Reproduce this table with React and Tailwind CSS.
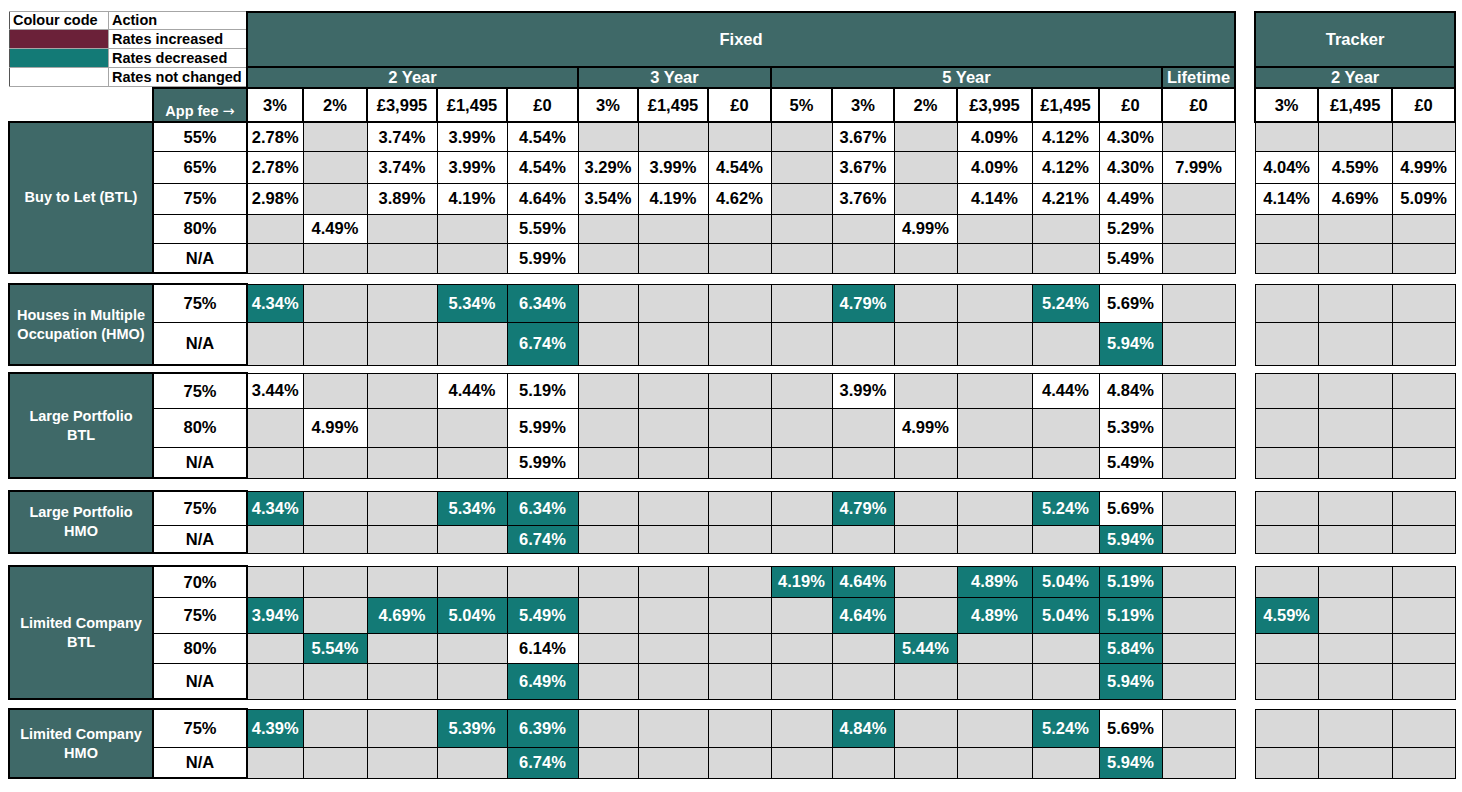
import React from 'react';

// column widths, line to line, left to right
const colWidths = [
  'w-[144px]', 'w-[94px]',
  'w-[56px]', 'w-[64px]', 'w-[70px]', 'w-[70px]', 'w-[71px]',
  'w-[60px]', 'w-[70px]', 'w-[63px]',
  'w-[61px]', 'w-[62px]', 'w-[63px]', 'w-[75px]', 'w-[67px]', 'w-[63px]',
  'w-[73px]',
  'w-[20px]',
  'w-[63px]', 'w-[74px]', 'w-[63px]',
];

const fixedFees = ['3%', '2%', '£3,995', '£1,495', '£0', '3%', '£1,495', '£0', '5%', '3%', '2%', '£3,995', '£1,495', '£0', '£0'];
const trackerFees = ['3%', '£1,495', '£0'];

const E = '';
// '*' prefix = rate decreased
const groups = [
  {
    label: ['Buy to Let (BTL)'],
    gap: 'h-[11px]',
    rows: [
      ['55%', 'h-[29px]', ['2.78%', E, '3.74%', '3.99%', '4.54%', E, E, E, E, '3.67%', E, '4.09%', '4.12%', '4.30%', E], [E, E, E]],
      ['65%', 'h-[32px]', ['2.78%', E, '3.74%', '3.99%', '4.54%', '3.29%', '3.99%', '4.54%', E, '3.67%', E, '4.09%', '4.12%', '4.30%', '7.99%'], ['4.04%', '4.59%', '4.99%']],
      ['75%', 'h-[31px]', ['2.98%', E, '3.89%', '4.19%', '4.64%', '3.54%', '4.19%', '4.62%', E, '3.76%', E, '4.14%', '4.21%', '4.49%', E], ['4.14%', '4.69%', '5.09%']],
      ['80%', 'h-[29px]', [E, '4.49%', E, E, '5.59%', E, E, E, E, E, '4.99%', E, E, '5.29%', E], [E, E, E]],
      ['N/A', 'h-[30px]', [E, E, E, E, '5.99%', E, E, E, E, E, E, E, E, '5.49%', E], [E, E, E]],
    ],
  },
  {
    label: ['Houses in Multiple', 'Occupation (HMO)'],
    gap: 'h-[8px]',
    rows: [
      ['75%', 'h-[38px]', ['*4.34%', E, E, '*5.34%', '*6.34%', E, E, E, E, '*4.79%', E, E, '*5.24%', '5.69%', E], [E, E, E]],
      ['N/A', 'h-[43px]', [E, E, E, E, '*6.74%', E, E, E, E, E, E, E, E, '*5.94%', E], [E, E, E]],
    ],
  },
  {
    label: ['Large Portfolio', 'BTL'],
    gap: 'h-[13px]',
    rows: [
      ['75%', 'h-[35px]', ['3.44%', E, E, '4.44%', '5.19%', E, E, E, E, '3.99%', E, E, '4.44%', '4.84%', E], [E, E, E]],
      ['80%', 'h-[39px]', [E, '4.99%', E, E, '5.99%', E, E, E, E, E, '4.99%', E, E, '5.39%', E], [E, E, E]],
      ['N/A', 'h-[31px]', [E, E, E, E, '5.99%', E, E, E, E, E, E, E, E, '5.49%', E], [E, E, E]],
    ],
  },
  {
    label: ['Large Portfolio', 'HMO'],
    gap: 'h-[13px]',
    rows: [
      ['75%', 'h-[34px]', ['*4.34%', E, E, '*5.34%', '*6.34%', E, E, E, E, '*4.79%', E, E, '*5.24%', '5.69%', E], [E, E, E]],
      ['N/A', 'h-[28px]', [E, E, E, E, '*6.74%', E, E, E, E, E, E, E, E, '*5.94%', E], [E, E, E]],
    ],
  },
  {
    label: ['Limited Company', 'BTL'],
    gap: 'h-[10px]',
    rows: [
      ['70%', 'h-[31px]', [E, E, E, E, E, E, E, E, '*4.19%', '*4.64%', E, '*4.89%', '*5.04%', '*5.19%', E], [E, E, E]],
      ['75%', 'h-[36px]', ['*3.94%', E, '*4.69%', '*5.04%', '*5.49%', E, E, E, E, '*4.64%', E, '*4.89%', '*5.04%', '*5.19%', E], ['*4.59%', E, E]],
      ['80%', 'h-[30px]', [E, '*5.54%', E, E, '6.14%', E, E, E, E, E, '*5.44%', E, E, '*5.84%', E], [E, E, E]],
      ['N/A', 'h-[36px]', [E, E, E, E, '*6.49%', E, E, E, E, E, E, E, E, '*5.94%', E], [E, E, E]],
    ],
  },
  {
    label: ['Limited Company', 'HMO'],
    gap: null,
    rows: [
      ['75%', 'h-[38px]', ['*4.39%', E, E, '*5.39%', '*6.39%', E, E, E, E, '*4.84%', E, E, '*5.24%', '5.69%', E], [E, E, E]],
      ['N/A', 'h-[31px]', [E, E, E, E, '*6.74%', E, E, E, E, E, E, E, E, '*5.94%', E], [E, E, E]],
    ],
  },
];

const Rate = ({ v }) => {
  if (!v) return <td className="p-0 border border-black bg-[#d9d9d9]" />;
  const down = v.startsWith('*');
  return (
    <td className={`p-0 border border-black text-center ${down ? 'bg-[#137a76] text-white' : 'bg-white text-black'}`}>
      {down ? v.slice(1) : v}
    </td>
  );
};

const Spacer = () => <td className="p-0 border-0" />;

const Legend = () => (
  <table className="table-fixed border-collapse w-[237px] -mt-px text-[14.5px] text-black leading-none">
    <colgroup>
      <col className="w-[99px]" />
      <col className="w-[138px]" />
    </colgroup>
    <tbody>
      <tr className="h-[18px]">
        <td className="p-0 pl-[3px] border border-[#a6a6a6] border-l-[#555] bg-white">Colour code</td>
        <td className="p-0 pl-[3px] border border-[#a6a6a6] border-r-2 bg-white">Action</td>
      </tr>
      <tr className="h-[19px]">
        <td className="p-0 border border-[#a6a6a6] border-l-[#555] bg-[#6b2139]" />
        <td className="p-0 pl-[3px] border border-[#a6a6a6] border-r-2 bg-white">Rates increased</td>
      </tr>
      <tr className="h-[19px]">
        <td className="p-0 border border-[#a6a6a6] border-l-[#555] bg-[#137a76]" />
        <td className="p-0 pl-[3px] border border-[#a6a6a6] border-r-2 bg-white">Rates decreased</td>
      </tr>
      <tr className="h-[19px]">
        <td className="p-0 border border-[#a6a6a6] border-l-[#555] bg-white" />
        <td className="p-0 pl-[3px] border border-[#a6a6a6] border-r-2 bg-white">Rates not changed</td>
      </tr>
    </tbody>
  </table>
);

const head = 'p-0 border-2 border-black bg-[#3f6968] text-white text-center';

export default function App() {
  return (
    <div className="min-h-screen bg-white pl-[8px] pt-[11px] font-['Liberation_Sans',Arial,sans-serif] font-bold">
      <table className="table-fixed border-collapse w-[1446px] text-[16.5px] leading-none">
        <colgroup>
          {colWidths.map((w, i) => (
            <col key={i} className={w} />
          ))}
        </colgroup>
        <tbody>
          <tr className="h-[53px]">
            <td colSpan={2} rowSpan={2} className="p-0 border-0 align-top">
              <Legend />
            </td>
            <td colSpan={15} className={head}>Fixed</td>
            <Spacer />
            <td colSpan={3} className={head}>Tracker</td>
          </tr>
          <tr className="h-[20px]">
            <td colSpan={5} className={head}>2 Year</td>
            <td colSpan={3} className={head}>3 Year</td>
            <td colSpan={6} className={head}>5 Year</td>
            <td className={head}>Lifetime</td>
            <Spacer />
            <td colSpan={3} className={head}>2 Year</td>
          </tr>
          <tr className="h-[34px]">
            <td className="p-0 border-0" />
            <td className={`${head} align-bottom text-[14.5px] pb-[3px]`}>
              App fee <span className="font-['DejaVu_Sans',sans-serif] font-normal">→</span>
            </td>
            {fixedFees.map((f, i) => (
              <td key={i} className="p-0 border-2 border-black bg-white text-center text-black">{f}</td>
            ))}
            <Spacer />
            {trackerFees.map((f, i) => (
              <td key={i} className="p-0 border-2 border-black bg-white text-center text-black">{f}</td>
            ))}
          </tr>

          {groups.map((g, gi) => (
            <React.Fragment key={gi}>
              {g.rows.map(([ltv, h, fixed, tracker], ri) => {
                const last = ri === g.rows.length - 1;
                return (
                  <tr key={ri} className={h}>
                    {ri === 0 && (
                      <td rowSpan={g.rows.length} className="p-0 px-1 border-2 border-black bg-[#3f6968] text-white text-center text-[14.5px] leading-[19px]">
                        {g.label.map((l, li) => (
                          <div key={li}>{l}</div>
                        ))}
                      </td>
                    )}
                    <td
                      className={`p-0 border-l-2 border-r-2 border-black bg-white text-center text-black ${ri === 0 ? 'border-t-2' : 'border-t'} ${last ? 'border-b-2' : 'border-b'}`}
                    >
                      {ltv}
                    </td>
                    {fixed.map((v, ci) => (
                      <Rate key={ci} v={v} />
                    ))}
                    <Spacer />
                    {tracker.map((v, ci) => (
                      <Rate key={ci} v={v} />
                    ))}
                  </tr>
                );
              })}
              {g.gap && (
                <tr className={g.gap}>
                  <td colSpan={21} className="p-0 border-0" />
                </tr>
              )}
            </React.Fragment>
          ))}
        </tbody>
      </table>
    </div>
  );
}
